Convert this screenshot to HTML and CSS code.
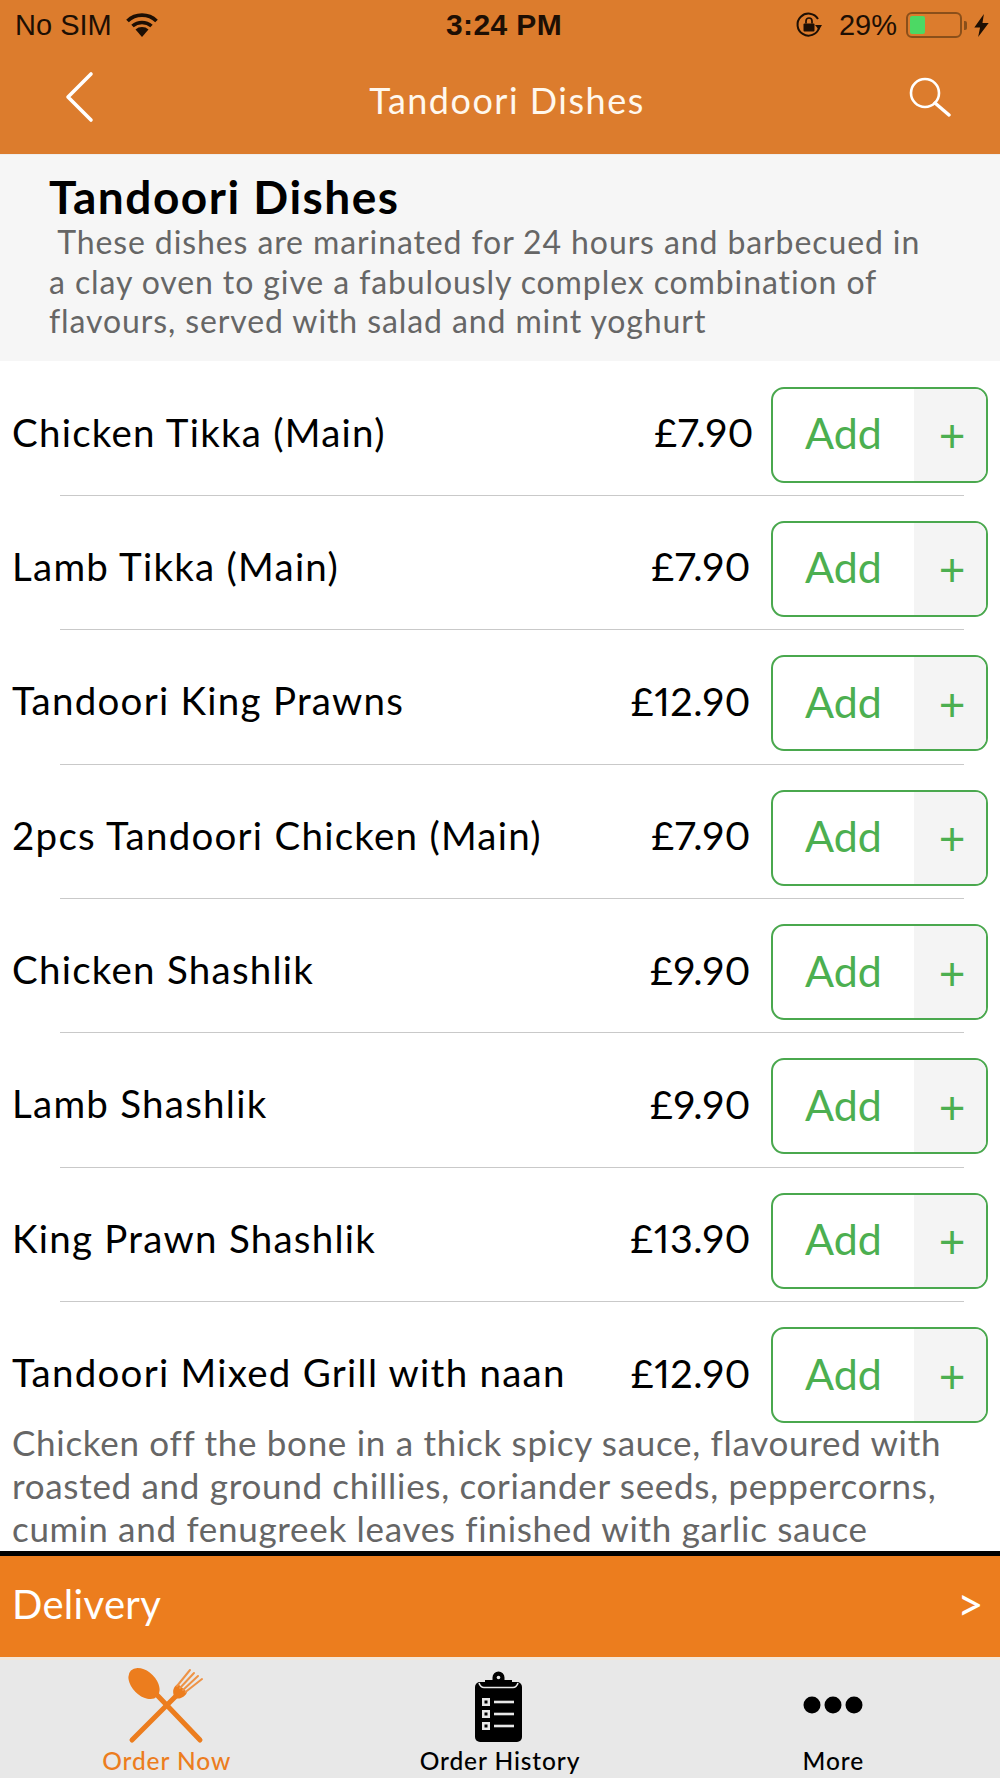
FILE: index.html
```html
<!DOCTYPE html>
<html lang="en">
<head>
<meta charset="utf-8">
<title>Tandoori Dishes</title>
<link rel="stylesheet" href="styles.css">
</head>
<body>
<div class="page">
  <header class="top">
    <div class="status">
      <div class="status-left">
        <span class="carrier">No SIM</span>
        <svg class="wifi" viewBox="0 0 34 24"><path d="M17 24 L10.5 16.5 A10 10 0 0 1 23.5 16.5 Z" fill="#1d0f04"/><path d="M7.5 13 A14.5 14.5 0 0 1 26.5 13" fill="none" stroke="#1d0f04" stroke-width="3.6"/><path d="M2.5 8 A21 21 0 0 1 31.5 8" fill="none" stroke="#1d0f04" stroke-width="3.8"/></svg>
      </div>
      <span class="clock">3:24 PM</span>
      <div class="status-right">
        <svg class="rotlock" viewBox="0 0 28 28"><path d="M24 17 A11 11 0 1 1 23 8" fill="none" stroke="#1d0f04" stroke-width="2"/><path d="M20 14 L27 14 L24 19 Z" fill="#1d0f04"/><rect x="8.5" y="12.5" width="11" height="8" rx="1" fill="#1d0f04"/><path d="M11 12.5 V10 A3 3 0 0 1 17 10 V12.5" fill="none" stroke="#1d0f04" stroke-width="1.7"/></svg>
        <span class="pct">29%</span>
        <div class="battery"><div class="battery-fill"></div></div>
        <div class="nub"></div>
        <svg class="bolt" viewBox="0 0 15 24"><path d="M10 0 L0 14 H6 L4 24 L15 9.5 H8.500 Z" fill="#1d0f04"/></svg>
      </div>
    </div>
    <nav class="navbar">
      <svg class="back" viewBox="0 0 30 52"><path d="M27 3 L4 26 L27 49" fill="none" stroke="#fff" stroke-width="3.6" stroke-linecap="round" stroke-linejoin="round"/></svg>
      <span class="nav-title">Tandoori Dishes</span>
      <svg class="search" viewBox="0 0 44 40"><circle cx="17" cy="16" r="14" fill="none" stroke="#fff" stroke-width="2.6"/><path d="M27 26 L41 38" stroke="#fff" stroke-width="3.4" stroke-linecap="round"/></svg>
    </nav>
  </header>

  <section class="intro">
    <h1>Tandoori Dishes</h1>
    <p>&nbsp;These dishes are marinated for 24 hours and barbecued in a clay oven to give a fabulously complex combination of flavours, served with salad and mint yoghurt</p>
  </section>

  <main class="list">
    <div class="row"><span class="name">Chicken Tikka (Main)</span><span class="price price-first">£7.90</span><div class="btn"><span class="btn-add">Add</span><span class="btn-plus">+</span></div></div>
    <div class="sep"></div>
    <div class="row"><span class="name">Lamb Tikka (Main)</span><span class="price">£7.90</span><div class="btn"><span class="btn-add">Add</span><span class="btn-plus">+</span></div></div>
    <div class="sep"></div>
    <div class="row"><span class="name">Tandoori King Prawns</span><span class="price">£12.90</span><div class="btn"><span class="btn-add">Add</span><span class="btn-plus">+</span></div></div>
    <div class="sep"></div>
    <div class="row"><span class="name">2pcs Tandoori Chicken (Main)</span><span class="price">£7.90</span><div class="btn"><span class="btn-add">Add</span><span class="btn-plus">+</span></div></div>
    <div class="sep"></div>
    <div class="row"><span class="name">Chicken Shashlik</span><span class="price">£9.90</span><div class="btn"><span class="btn-add">Add</span><span class="btn-plus">+</span></div></div>
    <div class="sep"></div>
    <div class="row"><span class="name">Lamb Shashlik</span><span class="price">£9.90</span><div class="btn"><span class="btn-add">Add</span><span class="btn-plus">+</span></div></div>
    <div class="sep"></div>
    <div class="row"><span class="name">King Prawn Shashlik</span><span class="price">£13.90</span><div class="btn"><span class="btn-add">Add</span><span class="btn-plus">+</span></div></div>
    <div class="sep"></div>
    <div class="row row-last"><span class="name">Tandoori Mixed Grill with naan</span><span class="price">£12.90</span><div class="btn"><span class="btn-add">Add</span><span class="btn-plus">+</span></div></div>
    <p class="dish-desc">Chicken off the bone in a thick spicy sauce, flavoured with roasted and ground chillies, coriander seeds, peppercorns, cumin and fenugreek leaves finished with garlic sauce</p>
  </main>

  <div class="delivery"><span>Delivery</span><span class="chev">&gt;</span></div>

  <footer class="tabs">
    <div class="tab tab-active">
      <svg class="tab-icon" viewBox="0 0 80 78">
        <ellipse cx="17" cy="17.500" rx="18.500" ry="12" transform="rotate(45 17 17.500)" fill="#ec7d1e"/>
        <path d="M31 30 L73 74" stroke="#ec7d1e" stroke-width="5" stroke-linecap="round"/>
        <path d="M5 74 L52 27" stroke="#ec7d1e" stroke-width="5" stroke-linecap="round"/>
        <path d="M48 32 C44 25 47 20 51 18 L60 26 C59 30 53 34 48 32 Z" fill="#ec7d1e"/>
        <path d="M50 20 L63 4 M53 22 L67 7 M56 24 L71 10 M58.500 26 L75 13" stroke="#ee9346" stroke-width="2" stroke-linecap="round"/>
      </svg>
      <span class="tab-label">Order Now</span>
    </div>
    <div class="tab">
      <svg class="tab-icon" viewBox="0 0 80 78">
        <rect x="15" y="16" width="47" height="60" rx="5" fill="#000"/>
        <path d="M19 17 C20 20 21 21.500 24 21.500 H53 C56 21.500 57 20 58 17" fill="none" stroke="#e8e8e8" stroke-width="1.600"/>
        <path d="M25 19 V14 H32.500 V11.500 A6 6 0 0 1 44.500 11.500 V14 H52 V19 Z" fill="#000"/>
        <circle cx="38.500" cy="11.500" r="1.800" fill="#e8e8e8"/>
        <g fill="#e8e8e8">
          <path fill-rule="evenodd" d="M22 32 H30 V40 H22 Z M24.500 34.500 V37.500 H27.500 V34.500 Z"/>
          <path fill-rule="evenodd" d="M22 44 H30 V52 H22 Z M24.500 46.500 V49.500 H27.500 V46.500 Z"/>
          <path fill-rule="evenodd" d="M22 56 H30 V64 H22 Z M24.500 58.500 V61.500 H27.500 V58.500 Z"/>
          <rect x="34" y="34.700" width="20" height="2.600"/>
          <rect x="34" y="46.700" width="20" height="2.600"/>
          <rect x="34" y="58.700" width="20" height="2.600"/>
        </g>
      </svg>
      <span class="tab-label">Order History</span>
    </div>
    <div class="tab">
      <svg class="tab-icon" viewBox="0 0 80 78">
        <circle cx="19" cy="39" r="8.500" fill="#000"/><circle cx="40" cy="39" r="8.500" fill="#000"/><circle cx="61" cy="39" r="8.500" fill="#000"/>
      </svg>
      <span class="tab-label">More</span>
    </div>
  </footer>
</div>
</body>
</html>
```
FILE: styles.css
```css
* { box-sizing: border-box; }
html, body { margin: 0; padding: 0; }
body { font-family: "Lato", "Open Sans", sans-serif; background: #fff; }

.page {
  width: 1000px;
  height: 1778px;
  display: flex;
  flex-direction: column;
  overflow: hidden;
}

.top { height: 155px; background: #dc7c2d; flex: none; border-bottom: 1px solid #eee; }

.status {
  height: 50px;
  padding: 0 11px 0 15px;
  display: flex;
  align-items: center;
  justify-content: space-between;
  color: #1d0f04;
  font-family: "Liberation Sans", Arial, sans-serif;
  font-size: 29px;
}
.status-left, .status-right { display: flex; align-items: center; }
.status-left { width: 344px; }
.status-right { width: 340px; justify-content: flex-end; }
.wifi { width: 36px; height: 24px; margin-left: 12px; }
.clock { font-weight: 700; font-size: 30px; letter-spacing: .4px; }
.rotlock { width: 28px; height: 28px; margin-right: 16px; }
.pct { margin-right: 9px; }
.battery {
  width: 56px;
  height: 26px;
  border: 2px solid #8a4f1a;
  border-radius: 6px;
  padding: 2px;
}
.battery-fill { width: 15px; height: 100%; background: #4cd964; border-radius: 2px; }
.nub { width: 3px; height: 9px; background: #8a4f1a; border-radius: 0 2px 2px 0; margin: 0 7px 0 2px; }
.bolt { width: 15px; height: 23px; }

.navbar {
  height: 104px;
  display: flex;
  align-items: center;
  justify-content: space-between;
  padding: 0 48px 10px 64px;
}
.back { width: 30px; height: 52px; }
.nav-title { color: #fff8ee; font-size: 36px; letter-spacing: 1.500px; margin: 5px 0 0 12px; }
.search { width: 44px; height: 40px; }

.intro {
  height: 206px;
  flex: none;
  background: #f6f6f6;
  padding: 19px 60px 0 49px;
}
.intro h1 {
  margin: 0;
  font-size: 46px;
  line-height: 46px;
  font-weight: 700;
  color: #000;
  letter-spacing: 1.500px;
  white-space: nowrap;
}
.intro p {
  margin: 2px 0 0;
  font-size: 32px;
  line-height: 39.700px;
  color: #666;
  letter-spacing: .900px;
}

.list { flex: 1; min-height: 0; overflow: hidden; padding-top: .5px; background: #fff; }
.row {
  display: flex;
  align-items: center;
  padding: 25px 12px 12.400px 12px;
}
.row-last { padding-bottom: 0; }
.name { flex: 1; font-size: 38.500px; color: #000; letter-spacing: 1.250px; white-space: nowrap; padding-bottom: 6px; }
.price { font-size: 39.500px; color: #000; margin-right: 20px; letter-spacing: .5px; padding-bottom: 6px; font-variant-numeric: proportional-nums; }
.price-first { margin-right: 17px; }
.btn {
  width: 217px;
  height: 96px;
  flex: none;
  display: flex;
  border: 2.500px solid #4aa84e;
  border-radius: 13px;
  overflow: hidden;
  color: #4caf50;
}
.btn-add { width: 141px; display: flex; align-items: center; justify-content: center; font-size: 43px; padding-bottom: 4px; }
.btn-plus { flex: 1; display: flex; align-items: center; justify-content: center; background: #f4f4f4; font-size: 46px; padding: 0 0 0 4px; }

.sep { height: 1px; margin: 0 36px 0 60px; background: #c9c9c9; }

.dish-desc {
  margin: -2px 0 0;
  padding: 0 12px;
  font-size: 35px;
  line-height: 43px;
  color: #666;
  letter-spacing: .700px;
}

.delivery {
  flex: none;
  height: 106px;
  border-top: 5px solid #000;
  background: #ec7d1e;
  color: #fff;
  font-size: 40px;
  letter-spacing: .3px;
  padding: 0 16px 6px 12px;
  display: flex;
  align-items: center;
  justify-content: space-between;
}
.chev { font-size: 46px; }

.tabs {
  flex: none;
  height: 121px;
  background: #e8e8e8;
  border-top: 3px solid #f4e6d8;
  display: grid;
  grid-template-columns: repeat(3, 1fr);
}
.tab { display: flex; flex-direction: column; align-items: center; padding-top: 6px; color: #000; }
.tab-active { color: #ec7d1e; }
.tab-icon { width: 80px; height: 78px; flex: none; }
.tab-label { font-size: 24.500px; line-height: 28px; font-weight: 500; letter-spacing: .9px; margin-top: 3px; }
```
